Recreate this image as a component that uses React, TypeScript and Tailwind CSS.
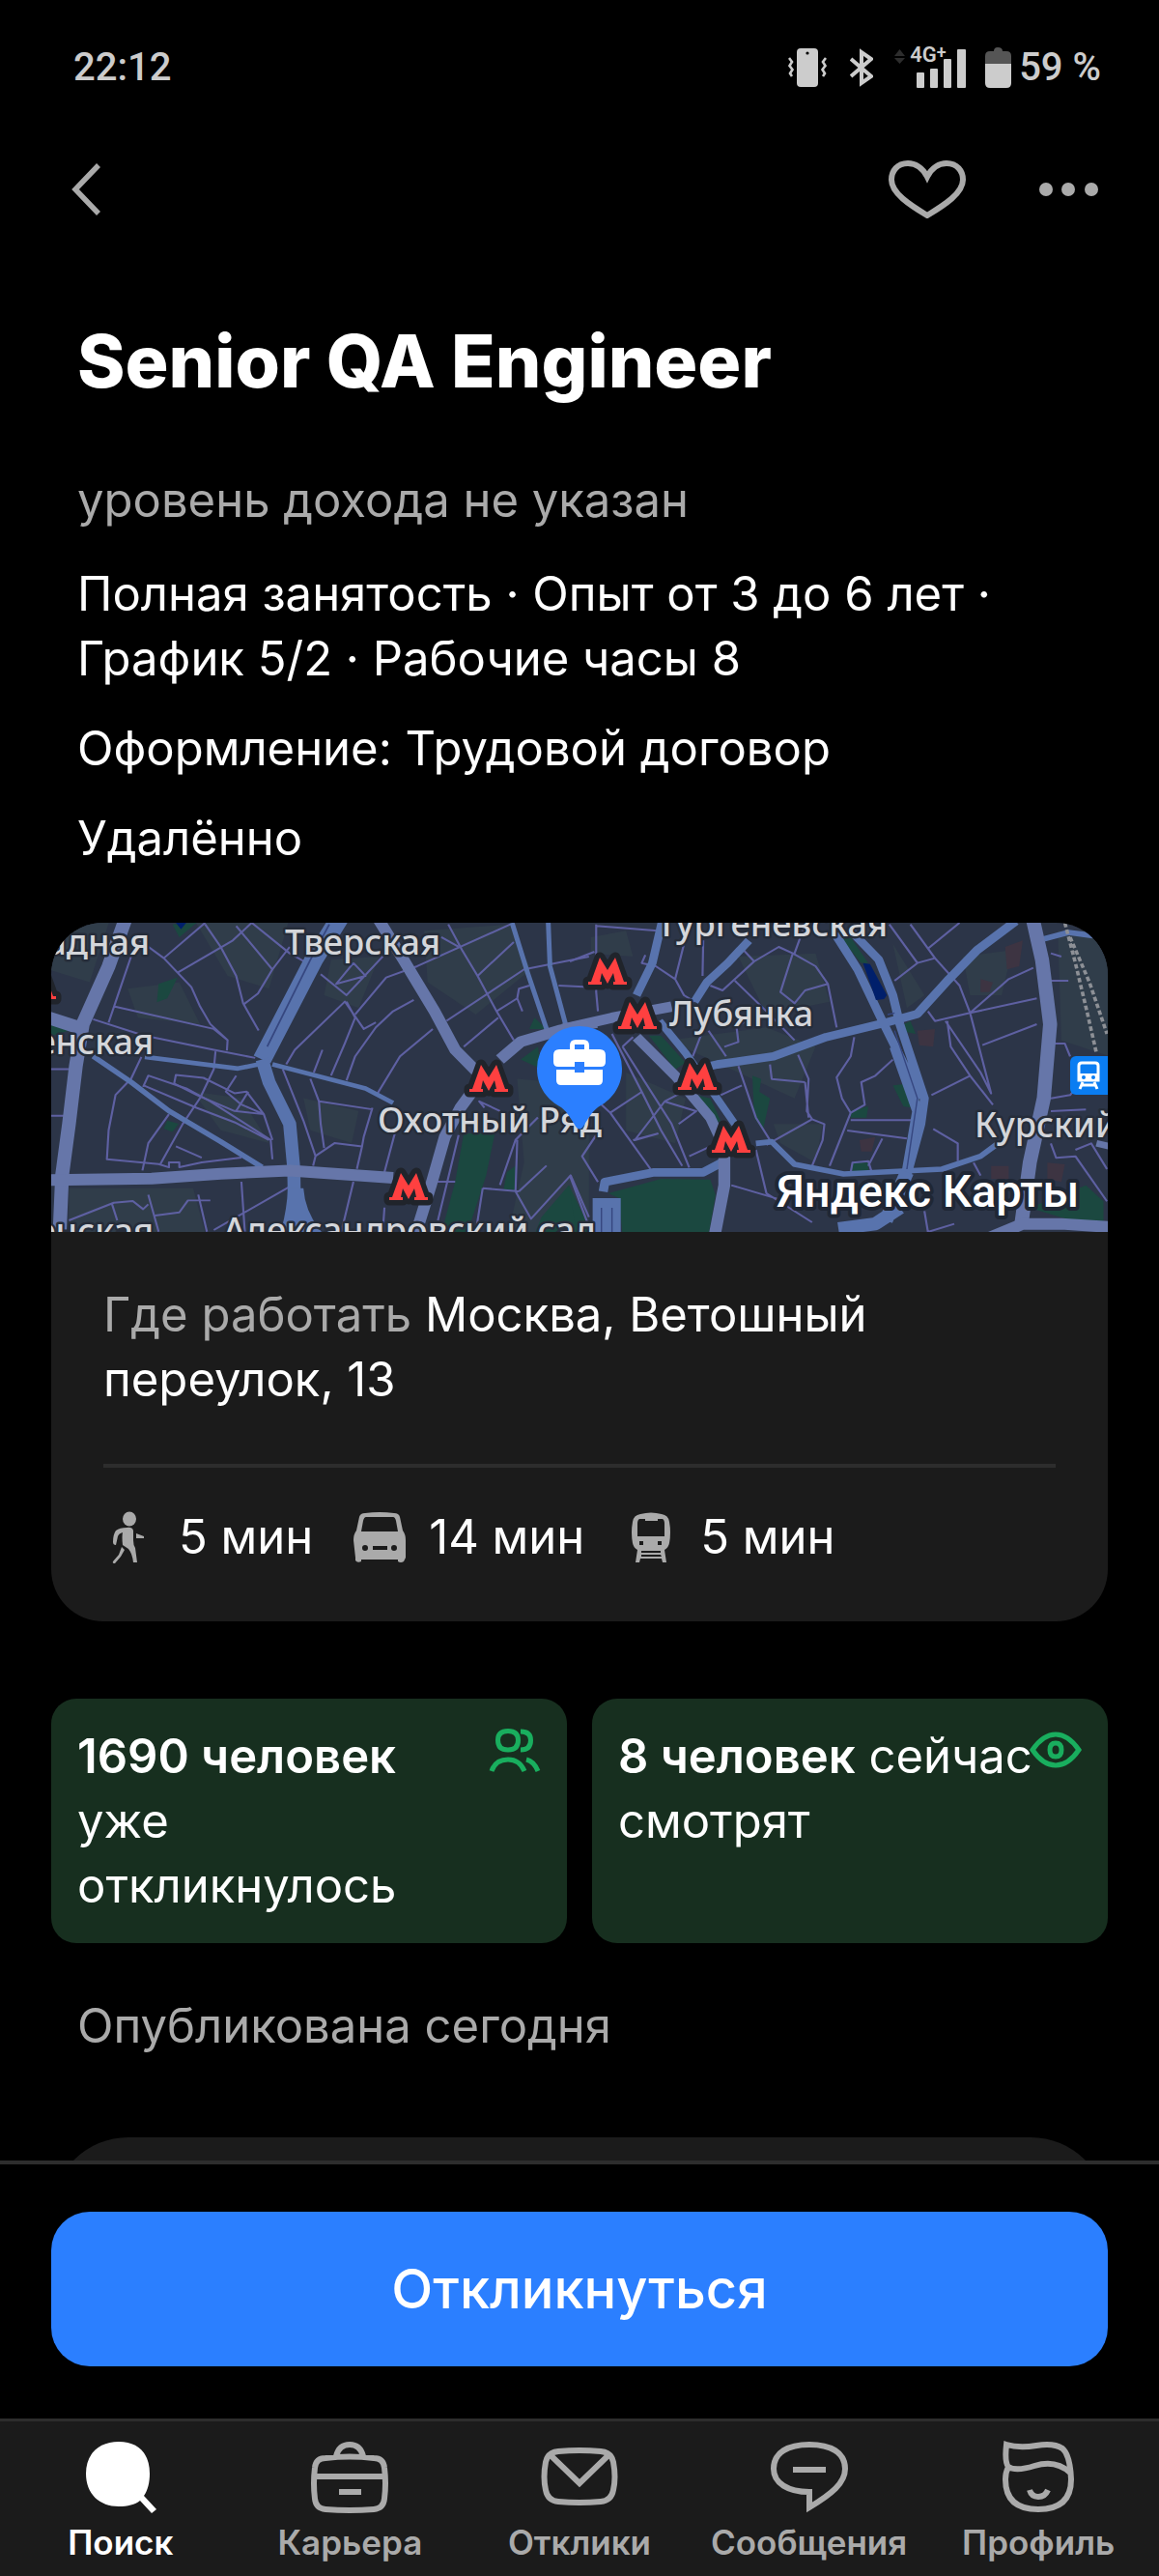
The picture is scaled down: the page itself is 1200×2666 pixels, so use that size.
import type { ReactNode } from 'react';

type MapLabel = { text: string; x: number; y: number; end?: boolean };

const mapLabels: MapLabel[] = [
  { text: 'адная', x: 102, y: 33, end: true },
  { text: 'енская', x: 106, y: 136, end: true },
  { text: 'енская', x: 106, y: 332, end: true },
  { text: 'Тверская', x: 242, y: 33 },
  { text: 'Охотный Ряд', x: 338, y: 217 },
  { text: 'Александровский сад', x: 178, y: 331 },
  { text: 'Лубянка', x: 640, y: 107 },
  { text: 'Тургеневская', x: 627, y: 14 },
  { text: 'Курский', x: 956, y: 222 },
];

const metroStations = [
  [-35, 51],
  [433, 147],
  [350, 259],
  [556, 36],
  [587, 82],
  [649, 145],
  [684, 210],
];

const metroSign = 'M0 28V25H3L12 0L20 13L28 0L37 25H40V28H26V25H28L26 16L20 27L14 16L12 25H14V28Z';

function MapWest() {
  return (
    <g transform="translate(-3 -5) scale(.357 .333)" fill="none" strokeLinejoin="round">
      <g fill="#303d4a">
        <path d="M0 0H180L120 200L0 160Z M420 0H700L640 220L520 180Z M1090 40L1340 20L1400 160L1240 300L1100 200Z M230 220L380 200L440 330L260 310Z M740 560L900 600L880 700L760 660Z M60 840H420L460 1000H60Z M820 130L960 120L900 280L800 240Z M420 540L560 560L640 700L500 660Z" />
        <path d="M1360 500L1568 520V1000H1330L1380 760Z" />
      </g>
      <g fill="#1b4840">
        <path d="M320 205L375 185L345 250L315 262Z M345 630L378 640L360 665L335 655Z M1205 670H1295L1270 800L1215 980H1140L1180 820Z M1330 790L1355 770V845H1320Z M1510 830L1568 960V985H1410L1430 930Z M1410 310L1445 345H1395Z M1370 440L1420 400L1430 470Z M0 330L60 350L0 370Z M360 20L430 15L380 60Z" />
      </g>
      <path d="M370 15H400L385 35Z" fill="#001f6b" />
      <g stroke="#5e60a2" strokeWidth="6">
        <path d="M240 120L205 230L175 325 M265 70L335 125L375 170L415 215L440 275L470 330L520 380L518 412 M190 275L480 345L520 380 M130 315L275 365L480 410L600 435" />
        <path d="M335 125L455 15 M375 170L535 70L590 15 M455 20L500 90L545 180L565 265L610 350 M545 25L650 160L608 235L565 270 M590 15L700 110L750 140 M650 160L700 90" />
        <path d="M270 432L240 500L195 550L175 660L170 750L320 765L350 775V760H380V775L445 760L560 745 M275 525L290 490L400 530L470 570L645 690L650 750 M275 520L430 590L540 635L640 690" />
        <path d="M365 515L370 488L450 497L540 545L575 540L625 610L540 600L430 550L365 515 M545 490L515 540L560 580L625 610L650 690 M485 415L480 470L440 560L390 640L325 765 M580 540L545 600 M350 610L290 700L273 785 M370 710L445 745" />
        <path d="M790 175L865 240L970 120 M885 140L920 180L835 205L885 140 M1060 255L1000 290L950 340L890 430L865 505 M690 455L715 410L860 260L915 345L950 325 M865 260L890 310L860 390L820 490" />
        <path d="M795 410L770 480 M760 500L785 570L790 640L800 715 M785 570L940 595 M680 470L740 630L775 740L830 700L910 710L895 780 M775 740L768 770 M940 590L915 680L910 710 M1005 670L975 790 M890 300L980 185L1070 150L1340 20" />
        <path d="M1160 20L1200 100L1245 180L1300 290L1350 380 M1245 180L1350 75 M1155 320L1380 160L1568 120 M1300 290L1360 250L1375 290 M1360 250L1365 220L1395 210 M955 545L1020 430L1115 345 M1205 400L1305 310 M1480 210L1568 215 M1140 60L1190 90" />
        <path d="M60 940L190 885L245 880L275 905L290 890 M290 860L320 975 M310 925L380 915L405 878H470 M435 860L460 975 M185 890L200 940 M560 820L570 975 M480 970L700 835 M885 820L850 975 M975 900L970 975 M1190 675L1130 940 M1180 820H1110" />
        <path d="M1360 690L1355 850L1400 935L1515 800L1568 930 M1365 850L1445 770 M1260 840L1365 850 M1260 840L1240 975 M1310 830L1355 690L1420 620 M0 470H60 M0 615H45 M1265 590L1250 570L1310 600" />
      </g>
      <g stroke="#5873ad">
        <path d="M280 432L550 468L610 455M650 455L920 530L1000 575M1345 15L1390 170L1445 345M1450 15L1455 150L1500 330" strokeWidth="14" />
        <path d="M130 430L240 510L350 600L500 695L620 775" strokeWidth="16" />
        <path d="M845 0L770 130L620 440" strokeWidth="54" />
        <path d="M620 440L640 510L700 640L712 780L715 975" strokeWidth="38" />
      </g>
      <path d="M695 840Q692 910 672 985H800Q745 920 740 840Z" fill="#5873ad" />
      <path d="M815 20L760 130L635 400" stroke="#364780" strokeWidth="5" />
      <g stroke="#6676a9">
        <path d="M0 310L100 345M225 0L175 150L100 330L80 460L60 640L40 800L32 1000" strokeWidth="40" />
        <path d="M0 815L300 810L500 795L700 785L1000 808" strokeWidth="36" />
        <path d="M955 0L1030 130L1120 290L1180 410L1240 475M1250 510L1195 590L1150 680L1110 830L1065 985M1310 440L1370 385L1480 350L1590 325" strokeWidth="34" />
      </g>
    </g>
  );
}

function MapEast() {
  return (
    <g transform="translate(537 -5) scale(.3635 .3333)" fill="none" strokeLinejoin="round">
      <g fill="#303d4a">
        <path d="M280 380L560 340L700 400L640 560L480 480Z M480 120L700 110L740 260L560 300Z M920 80L1010 240L960 280Z M160 480L330 560L300 700L160 660Z M580 640L720 640L700 760L600 700Z M1120 120L1260 100L1230 240L1140 240Z" />
        <path d="M60 60L160 40L180 120L60 110Z M1390 40H1568V440L1400 380Z" />
      </g>
      <g fill="#3d3442">
        <path d="M1240 90L1290 70L1280 150L1245 160Z M990 350L1040 345L1035 400L995 395Z M825 690L870 680L860 725L830 725Z M1360 760L1410 765L1400 820L1360 810Z M1200 770H1250V810H1200Z M1170 190L1205 200L1195 230H1170Z" />
      </g>
      <g fill="#1b4840">
        <path d="M110 855L260 810L400 812L415 860L395 985H150L140 870Z M0 850L20 985H0Z M520 490L545 500L540 540L570 560L550 660L525 620Z M920 520L960 515L980 590L950 585Z M800 600L850 585L845 620H800Z M805 760H850V790H800Z M1310 900L1470 830L1520 880V960L1400 930Z M770 60H800L850 140H830Z M950 330L970 320L985 360L960 355Z M225 365L260 365L330 450L300 470Z M360 550L400 560L430 630L410 640Z" />
      </g>
      <g stroke="#5e60a2" strokeWidth="6">
        <path d="M75 20V230L80 290 M75 25L250 40 M0 135L70 105 M330 60L300 190L245 150L205 140L215 115 M300 190L325 240L355 260 M300 190L330 60 M380 70L378 180" />
        <path d="M495 100L525 135L595 90L635 110L600 230L640 265L670 225L735 205 M635 110L700 150L735 205L760 340 M400 210L435 225L525 135 M470 195L560 290L640 380 M670 20L640 110 M440 400L480 385L475 340L500 320 M375 360L350 430 M395 350L445 430" />
        <path d="M910 20L990 140L925 195 M990 140L1040 125L970 20 M1040 125L1110 210L1140 295L1200 545L1170 480L1070 320 M1020 95L1110 15 M1320 155L1250 190L1140 295L1040 320L1020 290 M1140 295L1330 250 M1175 395L1330 330 M1075 320L1085 400L1140 490L1205 580 M1030 550L1140 490" />
        <path d="M480 460L530 620L570 690 M570 455L575 500L670 510 M650 425L680 500L675 600L690 625L560 705 M690 625L725 640L720 690L690 770 M670 510L680 620 M810 370L800 430L760 495L775 560L800 605L740 770 M800 605L840 580L830 510L870 490L920 440" />
        <path d="M800 628H990 M790 660L960 685 M890 685L850 770 M1035 655L1105 700V755 M800 790L805 760L850 755L860 790 M120 360L205 540L260 660L320 770 M150 400L290 640L340 775 M205 540L115 605L90 580 M115 605L230 780 M180 690L250 670L185 690L270 570L360 600L310 640 M270 570L340 530 M90 650L35 740L80 820 M340 740L410 705" />
        <path d="M180 370L150 400 M430 550L490 520 M530 720L560 855L690 945 M460 830L600 875 M0 800L60 975 M1370 110L1400 120 M1370 195H1420 M1380 390L1410 390L1425 430 M1370 560L1425 550L1440 530 M1370 600L1470 595 M1370 700L1385 745L1440 740L1530 880 M1440 720L1485 700L1530 780 M1010 910L1020 975L1095 950 M1150 760L1170 800" />
      </g>
      <g stroke="#5873ad">
        <path d="M265 0L235 140L190 240M510 70L450 140L390 200L355 260" strokeWidth="24" />
        <path d="M350 472L420 455L580 430L730 370L900 325L990 298L1080 190L1160 100L1270 10" strokeWidth="26" />
        <path d="M750 40L820 160L890 320L1000 560M800 40L880 130L920 240L940 330L1010 560L1000 640L960 800" strokeWidth="25" />
        <path d="M925 400L990 600L960 790" strokeWidth="30" />
        <path d="M530 700L575 695L640 765L780 795L1060 780L1170 740L1220 700M1350 65L1420 45L1490 55" strokeWidth="17" />
        <path d="M95 850L100 820L240 790L380 790L440 755" strokeWidth="26" />
        <path d="M105 870V1000" strokeWidth="80" />
        <path d="M255 320L330 420L470 640" strokeWidth="22" />
        <path d="M765 965L870 950L940 900M960 790L900 940" strokeWidth="40" />
      </g>
      <path d="M90 900V980M120 900V980M925 350L990 560L960 780M905 300L925 295" stroke="#364780" strokeWidth="4" />
      <g stroke="#6676a9">
        <path d="M-20 345L120 310L290 275" strokeWidth="32" />
        <path d="M190 370L300 490L400 620L430 690" strokeWidth="30" />
        <path d="M440 740V830L410 1000" strokeWidth="34" />
        <path d="M1318 0L1345 130L1368 330L1350 560L1310 760L1285 960" strokeWidth="40" />
        <path d="M1180 1000L1290 950L1400 950L1540 960" strokeWidth="36" />
        <path d="M1500 700L1540 710" strokeWidth="20" />
      </g>
      <path d="M835 140L855 143L903 240L895 252L872 255Z" fill="#001f6b" />
      <g stroke="#8d9096" strokeWidth="10" strokeDasharray="14 8">
        <path d="M1410 15L1440 140L1475 300L1500 420M1425 60L1480 200L1530 360" />
      </g>
    </g>
  );
}

function CityMap() {
  return (
    <svg viewBox="0 0 1094 320" preserveAspectRatio="xMidYMid slice" className="block h-80 w-full" role="img" aria-label="Карта: Ветошный переулок, 13">
      <rect width="1094" height="320" fill="#2c3548" />
      <MapWest />
      <MapEast />
      {metroStations.map(([x, y]) => (
        <g key={`${x}-${y}`} transform={`translate(${x} ${y})`}>
          <path d={metroSign} fill="#20242b" stroke="#20242b" strokeWidth="11" strokeLinejoin="round" />
          <path d={metroSign} fill="#ff4040" />
        </g>
      ))}
      <g fontFamily="'Noto Sans', sans-serif" fontSize="36" fontWeight="500" fill="#d4d6da" stroke="#262d3a" strokeWidth="5" strokeLinejoin="round" paintOrder="stroke">
        {mapLabels.map((label) => (
          <text key={`${label.text}-${label.y}`} x={label.x} y={label.y} textAnchor={label.end ? 'end' : 'start'}>
            {label.text}
          </text>
        ))}
      </g>
      <text x="751" y="294" fontFamily="Roboto, sans-serif" fontSize="47" fontWeight="500" fill="#fff" stroke="#1f2735" strokeWidth="8" strokeLinejoin="round" paintOrder="stroke">
        Яндекс Карты
      </text>
      <g>
        <rect x="1055" y="138" width="48" height="40" rx="6" fill="#0a7df2" />
        <path d="M1067 145H1081Q1084 145 1084 148V163H1064V148Q1064 145 1067 145Z M1068 165L1065 172M1080 165L1083 172M1067 168H1081" fill="none" stroke="#fff" strokeWidth="3" />
        <path d="M1064 156H1084V164H1064Z" fill="#fff" />
        <circle cx="1069" cy="160" r="2" fill="#0a7df2" />
        <circle cx="1079" cy="160" r="2" fill="#0a7df2" />
      </g>
      {/* office pin */}
      <path d="M547 107A44 44 0 0 1 591 151C591 171 579 184 566 191C559 196 553 208 550 212Q547 215 544 212C541 208 535 196 528 191C515 184 503 171 503 151A44 44 0 0 1 547 107Z" fill="#2b7fff" />
      <path d="M537 131V127Q537 121 543 121H551Q557 121 557 127V131H568Q574 131 574 137V144Q574 149 569 149H552V144H542V149H525Q520 149 520 144V137Q520 131 526 131ZM542 131H552V126H542Z" fill="#fff" />
      <path d="M523 152H542V155H552V152H571V163Q571 168 566 168H528Q523 168 523 163Z" fill="#fff" />
    </svg>
  );
}

function StatusBar() {
  return (
    <div className="flex h-34 items-center justify-between pl-19 pr-15 pt-1 font-['Roboto',sans-serif] text-[40px] font-medium leading-none text-[#cccccc]">
      <span>22:12</span>
      <div className="flex items-center gap-2">
        <svg viewBox="0 0 40 40" className="mr-4 size-10" fill="none" stroke="currentColor" strokeWidth="2.6" aria-label="Вибрация">
          <rect x="9" width="22" height="40" rx="4" fill="currentColor" stroke="none" />
          <circle cx="20" cy="5" r="1.6" fill="#000" stroke="none" />
          <path d="M1 10L4 14L1.500 18L4.500 22L2 26L4 29M39 10L36 14L38.500 18L35.500 22L38 26L36 29" />
        </svg>
        <svg viewBox="0 0 24 40" className="mr-3 h-10 w-6" fill="none" stroke="currentColor" strokeWidth="4" aria-label="Bluetooth">
          <path d="M1 11L22 29L12 36V4L22 11L1 29" />
        </svg>
        <div className="relative mr-3">
          <svg viewBox="0 0 76 42" className="h-[42px] w-19" fill="currentColor" aria-label="Сигнал сети">
            <path d="M2 9L7.500 2L13 9ZM2 11H13L7.500 17Z" fill="#2d2d2d" />
            <rect x="25" y="26" width="8" height="16" rx="1" />
            <rect x="39" y="22" width="8" height="20" rx="1" />
            <rect x="53" y="12" width="8" height="30" rx="1" />
            <rect x="67" y="2" width="9" height="40" rx="1" />
          </svg>
          <span className="absolute -top-1 left-[18px] text-[22px] font-semibold leading-6">
            4G<sup className="align-baseline relative -top-1 text-[18px] leading-none">+</sup>
          </span>
        </div>
        <svg viewBox="0 0 27 42" className="h-[42px] w-[27px]" fill="currentColor" aria-label="Заряд">
          <path d="M0 18V9Q0 4 5 4H9Q9 0 13 0Q18 0 18 4H22Q27 4 27 9V18Z" fill="#555" />
          <path d="M0 17H27V37Q27 42 22 42H5Q0 42 0 37Z" />
        </svg>
        <span>59 %</span>
      </div>
    </div>
  );
}

function Header() {
  return (
    <header className="flex h-30 items-center justify-between pl-18 pr-14 text-[#aaaaaa]">
      <button aria-label="Назад">
        <svg viewBox="0 0 34 54" className="h-[54px] w-[34px]" fill="none" stroke="currentColor" strokeWidth="5.500">
          <path d="M30 2L6 27L30 52" />
        </svg>
      </button>
      <div className="flex items-center gap-18">
        <button aria-label="В избранное">
          <svg viewBox="0 0 80 60" className="h-15 w-20" fill="none" stroke="currentColor" strokeWidth="6">
            <path d="M40 17C35 7 27 3 20 3C9 3 3 11 3 20C3 34 22 46 40 57C58 46 77 34 77 20C77 11 71 3 60 3C53 3 45 7 40 17Z" />
          </svg>
        </button>
        <button aria-label="Ещё">
          <svg viewBox="0 0 72 40" className="h-10 w-18" fill="currentColor">
            <circle cx="11" cy="20" r="7" />
            <circle cx="34" cy="20" r="7" />
            <circle cx="58" cy="20" r="7" />
          </svg>
        </button>
      </div>
    </header>
  );
}

function Route({ icon, children }: { icon: ReactNode; children: ReactNode }) {
  return (
    <li className="flex items-center gap-6">
      <svg viewBox="0 0 54 54" className="size-[54px]" fill="#aaaaaa">
        {icon}
      </svg>
      {children}
    </li>
  );
}

function PlaceCard() {
  return (
    <section className="overflow-hidden rounded-[54px] bg-[#1b1b1b]">
      <CityMap />
      <div className="px-[54px] pb-[54px]">
        <p className="border-b-4 border-[#2d2d2d] pb-[54px] pt-13">
          <span className="text-[#aaaaaa]">Где работать</span> Москва, Ветошный
          <br />
          переулок, 13
        </p>
        <ul className="flex gap-[42px] pt-[38px]">
          <Route
            icon={
              <>
                <ellipse cx="27" cy="8" rx="7" ry="7.500" />
                <path d="M24 17Q30 16 31 20L31 30Q31 35 33 38L35 53H31Q30 44 26 39L20 35Q19 26 20 22Q16 23 15 26L13 35Q10 35 10 32Q10 24 13 20Q17 17 24 17Z M19 37L22 40L18 47L12 54Q9 54 10 52L16 45Z M34 23L42 26V28L34 28Z" />
              </>
            }
          >
            5 мин
          </Route>
          <Route
            icon={
              <path
                fillRule="evenodd"
                d="M12 2Q27 0 42 2Q47 2 48 6L51 20Q54 24 54 30V48L52 52Q49 54 46 52V50H8V52Q4 54 2 51V48L0 30Q0 24 3 20L6 6Q7 2 12 2ZM13 6Q11 6 10 10L8 21H46L44 10Q43 6 41 6ZM9 38A3 3 0 1 0 15 38A3 3 0 1 0 9 38ZM39 38A3 3 0 1 0 45 38A3 3 0 1 0 39 38ZM20 36V40H35V36Z"
              />
            }
          >
            14 мин
          </Route>
          <Route
            icon={
              <path
                fillRule="evenodd"
                d="M16 3Q27 0 38 3Q45 4 46 11Q48 22 46 33Q45 38 41 40L43 53H39L38 49H16L15 53H11L13 40Q9 38 8 33Q6 22 8 11Q9 4 16 3ZM15 8Q13 9 13 13V26H41V13Q41 9 39 8H34V10H21V8ZM15 31V35H19V31ZM34 31V35H38V31ZM17 41V43H37V41H17ZM17 45V47H38L37 45Z"
              />
            }
          >
            5 мин
          </Route>
        </ul>
      </div>
    </section>
  );
}

function StatCard({ icon, children }: { icon: ReactNode; children: ReactNode }) {
  return (
    <div className="flex flex-1 items-start justify-between rounded-[26px] bg-[#172f1f] px-[27px] py-[26px]">
      <p className="whitespace-nowrap">{children}</p>
      <svg viewBox="0 0 54 54" className="-ml-10 size-[54px] shrink-0" fill="none" stroke="#19ae5e" strokeWidth="5">
        {icon}
      </svg>
    </div>
  );
}

const tabs = [
  {
    title: 'Поиск',
    active: true,
    icon: (
      <path
        d="M38 1C58 1 70 13 70 34C70 43 68 51 64 57L77 71L72 75L60 62C55 66 47 68 38 68C18 68 4 55 4 34C4 13 18 1 38 1Z"
        fill="currentColor"
        stroke="none"
      />
    ),
  },
  {
    title: 'Карьера',
    icon: (
      <path d="M15 18Q40 15 65 18Q75 18 76 28Q78 44 76 60Q75 70 65 71Q40 73 15 71Q5 70 4 60Q2 44 4 28Q5 18 15 18ZM26 16Q29 4 40 4Q51 4 54 16M4 37H76M29 53H52" />
    ),
  },
  {
    title: 'Отклики',
    icon: (
      <path d="M18 11Q40 9 62 11Q73 12 75 22Q78 38 75 51Q73 62 62 63Q40 65 18 63Q7 62 5 51Q2 38 5 22Q7 12 18 11ZM9 14L40 44L71 14" />
    ),
  },
  {
    title: 'Сообщения',
    icon: <path d="M40 53C18 53 3 44 3 29C3 12 18 4 40 4C62 4 77 12 77 29C77 44 63 55 40 69ZM23 30H57" />,
  },
  {
    title: 'Профиль',
    icon: (
      <path d="M7 4Q20 8 38 5Q56 2 65 8Q73 15 74 40Q74 71 40 71Q6 71 6 40Q6 33 9 27Q5 22 7 4ZM9 27Q17 32 36 26Q58 19 73 33M31 51Q33 58 40 58Q47 58 50 51" />
    ),
  },
];

function TabBar() {
  return (
    <nav className="grid grid-cols-5 border-t-3 border-[#2d2d2d] bg-[#1b1b1b] px-1.5 pb-[13px] pt-5 font-semibold">
      {tabs.map((tab) => (
        <a key={tab.title} href="#" className={`flex flex-col items-center gap-2 text-[35px] leading-11 ${tab.active ? 'text-white' : 'text-[#aaaaaa]'}`}>
          <svg viewBox="0 0 80 75" className="h-[75px] w-20" fill="none" stroke="currentColor" strokeWidth="6">
            {tab.icon}
          </svg>
          {tab.title}
        </a>
      ))}
    </nav>
  );
}

export default function App() {
  return (
    <div className="flex min-h-screen flex-col bg-black font-['Inter',sans-serif] text-[49px] leading-[67px] text-white">
      <StatusBar />
      <Header />
      <main className="flex-1 px-[53px]">
        <div className="px-[27px]">
          <h1 className="pt-[70px] text-[75px] font-extrabold leading-24">Senior QA Engineer</h1>
          <p className="pt-[62px] text-[#aaaaaa]">уровень дохода не указан</p>
          <p className="pt-[30px]">
            Полная занятость · Опыт от 3 до 6 лет ·
            <br />
            График 5/2 · Рабочие часы 8
          </p>
          <p className="pt-[26px]">Оформление: Трудовой договор</p>
          <p className="pb-[54px] pt-[26px]">Удалённо</p>
        </div>
        <PlaceCard />
        <div className="flex gap-[26px] pt-20">
          <StatCard
            icon={<path d="M20 7.500Q30.500 7.500 30.500 17Q30.500 27 20 27Q9.500 27 9.500 17Q9.500 7.500 20 7.500ZM33 8Q43.500 8 43.500 17Q43.500 27 33 27M3 49Q7 37 20 37Q32 37 37 49M39 37Q47 39 51 49" />}
          >
            <b className="font-semibold">1690 человек</b>
            <br />
            уже
            <br />
            откликнулось
          </StatCard>
          <StatCard
            icon={<path d="M27 11Q40 11 51 27Q40 43 27 43Q14 43 3 27Q14 11 27 11ZM27 20Q33 20 33 27Q33 34 27 34Q21 34 21 27Q21 20 27 20Z" />}
          >
            <b className="font-semibold">8 человек</b> сейчас
            <br />
            смотрят
          </StatCard>
        </div>
        <p className="px-[27px] pb-[82px] pt-13 text-[#aaaaaa]">Опубликована сегодня</p>
        <div className="h-6 overflow-hidden">
          <div className="h-40 rounded-[80px] bg-[#1b1b1b]" />
        </div>
      </main>
      <div className="border-t-4 border-[#2d2d2d] px-[53px] pb-[54px] pt-[49px]">
        <button className="block h-40 w-full rounded-[40px] bg-[#2b7fff] text-[56px] font-medium">Откликнуться</button>
      </div>
      <TabBar />
    </div>
  );
}
